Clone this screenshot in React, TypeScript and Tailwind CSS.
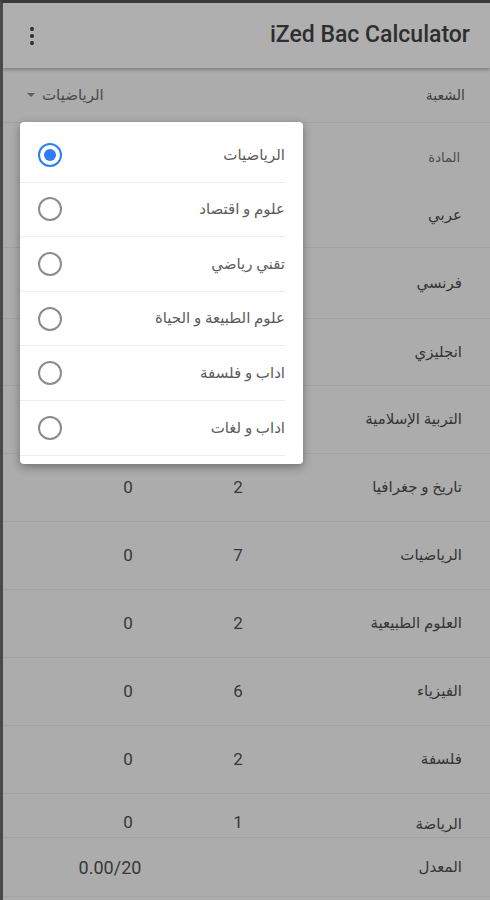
import React from 'react';

interface Subject {
  name: string;
  coef?: number;
  grade?: number;
}

// rows whose numbers sit behind the open dialog are left blank
const subjects: Subject[] = [
  { name: 'التربية الإسلامية' },
  { name: 'تاريخ و جغرافيا', coef: 2, grade: 0 },
  { name: 'الرياضيات', coef: 7, grade: 0 },
  { name: 'العلوم الطبيعية', coef: 2, grade: 0 },
  { name: 'الفيزياء', coef: 6, grade: 0 },
  { name: 'فلسفة', coef: 2, grade: 0 },
];

const branches = [
  'الرياضيات',
  'علوم و اقتصاد',
  'تقني رياضي',
  'علوم الطبيعة و الحياة',
  'اداب و فلسفة',
  'اداب و لغات',
];

const font = { fontFamily: 'Roboto, "DejaVu Sans", sans-serif' };

function SubjectRow({ subject, height }: { subject: Subject; height: string }) {
  return (
    <div className={`flex items-center border-b border-[#a2a2a2] pl-[70px] ${height}`}>
      <div className="w-[110px] text-center text-[17px] text-[#383838]">{subject.grade}</div>
      <div className="w-[110px] text-center text-[17px] text-[#383838]">{subject.coef}</div>
      <div className="flex-1 pr-[28px] text-right text-[15px] text-[#353535]" dir="rtl">
        {subject.name}
      </div>
    </div>
  );
}

function Radio({ checked }: { checked: boolean }) {
  if (checked) {
    return (
      <div className="flex h-[24px] w-[24px] items-center justify-center rounded-full border-2 border-[#2f7df6]">
        <div className="h-[12px] w-[12px] rounded-full bg-[#2f7df6]" />
      </div>
    );
  }
  return <div className="h-[24px] w-[24px] rounded-full border-2 border-[#8c8c8c]" />;
}

export default function App() {
  return (
    <div
      className="relative h-[900px] w-[490px] overflow-hidden border-l-[3px] border-t-[3px] border-l-[#4a4a4a] border-t-[#393939] bg-[#acacac]"
      style={font}
    >
      {/* Toolbar */}
      <div className="relative z-10 flex h-[65px] items-center justify-between bg-[#afafaf] pl-[27px] pr-[20px] shadow-[0_2px_3px_rgba(0,0,0,0.25)]">
        <div className="flex flex-col gap-[3px]">
          <span className="h-[4px] w-[4px] rounded-full bg-[#2a2a2a]" />
          <span className="h-[4px] w-[4px] rounded-full bg-[#2a2a2a]" />
          <span className="h-[4px] w-[4px] rounded-full bg-[#2a2a2a]" />
        </div>
        <div className="text-[23px] font-medium text-[#2e2e2e]">iZed Bac Calculator</div>
      </div>

      {/* Branch selector */}
      <div className="flex h-[55px] items-center justify-between border-b border-[#a2a2a2] pl-[24px] pr-[25px]">
        <div className="flex items-center gap-[7px]">
          <span className="h-0 w-0 border-x-[4px] border-t-[4px] border-x-transparent border-t-[#5e5e5e]" />
          <span className="text-[15px] text-[#4a4a4a]" dir="rtl">الرياضيات</span>
        </div>
        <span className="text-[14px] text-[#404040]" dir="rtl">الشعبة</span>
      </div>

      {/* Column header + first subject */}
      <div className="flex h-[125px] flex-col border-b border-[#a2a2a2]">
        <div className="flex h-[60px] items-end justify-end pb-[16px] pr-[30px]">
          <span className="text-[13px] text-[#4e4e4e]" dir="rtl">المادة</span>
        </div>
        <div className="flex flex-1 items-center justify-end pr-[28px]">
          <div className="text-right text-[15px] text-[#353535]" dir="rtl">عربي</div>
        </div>
      </div>

      <SubjectRow subject={{ name: 'فرنسي' }} height="h-[71px]" />
      <SubjectRow subject={{ name: 'انجليزي' }} height="h-[67px]" />
      {subjects.map((s) => (
        <SubjectRow key={s.name} subject={s} height="h-[68px]" />
      ))}
      <div className="flex h-[44px] items-end border-b border-[#a2a2a2] pb-[2px] pl-[70px]">
        <div className="w-[110px] text-center text-[17px] text-[#383838]">0</div>
        <div className="w-[110px] text-center text-[17px] text-[#383838]">1</div>
        <div className="flex-1 pr-[28px] text-right text-[15px] text-[#353535]" dir="rtl">الرياضة</div>
      </div>

      {/* Average */}
      <div className="flex h-[59px] items-center border-b border-[#a2a2a2]">
        <div className="w-[214px] text-center text-[18px] text-[#383838]">0.00/20</div>
        <div className="flex-1 pr-[28px] text-right text-[15px] text-[#353535]" dir="rtl">المعدل</div>
      </div>

      {/* Branch dialog */}
      <div className="absolute left-[17px] top-[119px] w-[283px] rounded-[4px] bg-white pb-[8px] pt-[6px] shadow-[0_3px_10px_rgba(0,0,0,0.35)]">
        {branches.map((b, i) => (
          <div
            key={b}
            className="mr-[18px] flex h-[54.6px] items-center justify-between border-b border-[#ececec] pl-[18px]"
          >
            <Radio checked={i === 0} />
            <span className="text-[15px] text-[#5c5c5c]" dir="rtl">{b}</span>
          </div>
        ))}
      </div>
    </div>
  );
}
